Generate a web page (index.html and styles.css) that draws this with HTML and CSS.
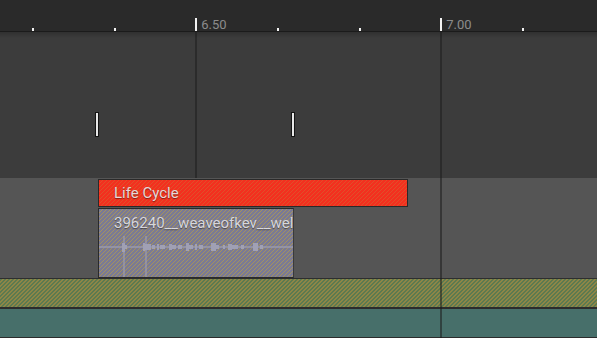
FILE: index.html
```html
<!DOCTYPE html>
<html lang="en">
<head>
    <meta charset="UTF-8">
    <title>Timeline</title>
    <link rel="stylesheet" href="styles.css">
</head>
<body>
    <div class="timeline">
        <div class="ruler">
            <div class="tick"></div>
            <div class="tick"></div>
            <div class="tick major"><span>6.50</span></div>
            <div class="tick"></div>
            <div class="tick"></div>
            <div class="tick major"><span>7.00</span></div>
            <div class="tick"></div>
        </div>

        <div class="lane lane-empty">
            <div class="cursor" style="left: 95px"></div>
            <div class="cursor" style="left: 291px"></div>
        </div>

        <div class="lane lane-clips">
            <div class="clip clip-red">Life Cycle</div>
            <div class="clip clip-audio">
                <div class="clip-name">396240__weaveofkev__wel</div>
                <svg class="wave" width="195" height="46" viewBox="0 0 195 46">
                    <line x1="0" y1="14" x2="195" y2="14" stroke="#9a9aae" stroke-width="1.5"/>
                    <line x1="25" y1="3" x2="25" y2="46" stroke="#a2a2b6" stroke-width="1"/>
                    <line x1="47" y1="3" x2="47" y2="46" stroke="#a2a2b6" stroke-width="1"/>
                    <path fill="#a0a0b4" d="M23 10h3v9h-3z M26 12h2v4h-2z M44 10h2v8h-2z M46 11h6v6h-6z M53 12h3v4h-3z M58 11h2v6h-2z M61 12h5v4h-5z M70 11h3v6h-3z M73 12h4v4h-4z M79 12h4v4h-4z M87 10h3v8h-3z M90 12h4v4h-4z M96 11h2v6h-2z M100 12h4v4h-4z M112 10h5v8h-5z M117 12h3v4h-3z M124 12h2v4h-2z M129 11h4v6h-4z M133 12h6v4h-6z M142 12h3v4h-3z M154 10h5v8h-5z M161 12h3v4h-3z"/>
                </svg>
            </div>
        </div>

        <div class="lane lane-green"></div>
        <div class="lane lane-teal"></div>

        <div class="gridline" style="left: 195px; top: 32px; height: 146px"></div>
        <div class="gridline" style="left: 440px; top: 32px; height: 306px"></div>
    </div>
</body>
</html>
```

FILE: styles.css
```css
body {
    margin: 0;
    background-color: #3c3c3c;
    font-family: Roboto, "Liberation Sans", sans-serif;
}

.timeline {
    position: relative;
    width: 597px;
    height: 338px;
    overflow: hidden;
    display: flex;
    flex-direction: column;
}

.ruler {
    flex: none;
    height: 32px;
    background-color: #2a2a2a;
    border-bottom: 1px solid #1b1b1b;
    box-sizing: border-box;
    display: flex;
    align-items: flex-end;
    padding-left: 32px;
}

.tick {
    width: 81.67px;
    height: 31px;
    flex: none;
    position: relative;
    border-left: 2px solid transparent;
    box-sizing: border-box;
}

.tick::before {
    content: "";
    position: absolute;
    left: -2px;
    bottom: 0;
    width: 2px;
    height: 3px;
    background-color: #f2f2f2;
}

.tick.major::before {
    height: 13px;
}

.tick span {
    position: absolute;
    left: 4px;
    bottom: -1px;
    font-size: 13px;
    color: #8c8c8c;
}

.lane {
    position: relative;
    flex: none;
}

.lane-empty {
    height: 146px;
    background: linear-gradient(#303030, #3c3c3c 6px);
}

.cursor {
    position: absolute;
    top: 80px;
    width: 2px;
    height: 23px;
    background-color: #e8e8e8;
    border: 1px solid #151515;
}

.lane-clips {
    height: 101px;
    background-color: #555555;
    border-bottom: 1px solid #2e2e2e;
    padding-top: 1px;
    box-sizing: border-box;
    display: flex;
    flex-direction: column;
    gap: 1px;
}

.clip {
    margin-left: 98px;
    border: 1px solid #2a2a2a;
    box-sizing: border-box;
    color: #e6d8d8;
    font-size: 15px;
    text-shadow: 0 1px 1px rgba(0, 0, 0, 0.45);
    overflow: hidden;
    white-space: nowrap;
    background-size: 4px 4px;
}

.clip-red {
    width: 310px;
    height: 28px;
    line-height: 27px;
    padding-left: 15px;
    background-color: #f3301f;
    background-image: linear-gradient(-45deg, #e0502a 0 9%, transparent 9% 50%, #e0502a 50% 59%, transparent 59%);
}

.clip-audio {
    width: 196px;
    height: 71px;
    border-right-color: #3a3a3a;
    background-color: #7a7a94;
    background-image: linear-gradient(-45deg, #a39260 0 8%, transparent 8% 50%, #a39260 50% 58%, transparent 58%);
}

.clip-name {
    padding: 5px 0 0 15px;
    color: #d6d6dc;
}

.wave {
    display: block;
    margin-top: 1px;
}

.lane-green {
    height: 28px;
    border-bottom: 2px solid #2c2c2c;
    background-color: #5c7a50;
    background-image: linear-gradient(-45deg, #8e8646 0 16%, transparent 16% 50%, #8e8646 50% 66%, transparent 66%);
    background-size: 4px 4px;
}

.lane-teal {
    height: 28px;
    background-color: #476f6a;
    border-bottom: 1px solid #2c2c2c;
}

.gridline {
    position: absolute;
    width: 2px;
    background-color: rgba(30, 30, 30, 0.55);
}
```
